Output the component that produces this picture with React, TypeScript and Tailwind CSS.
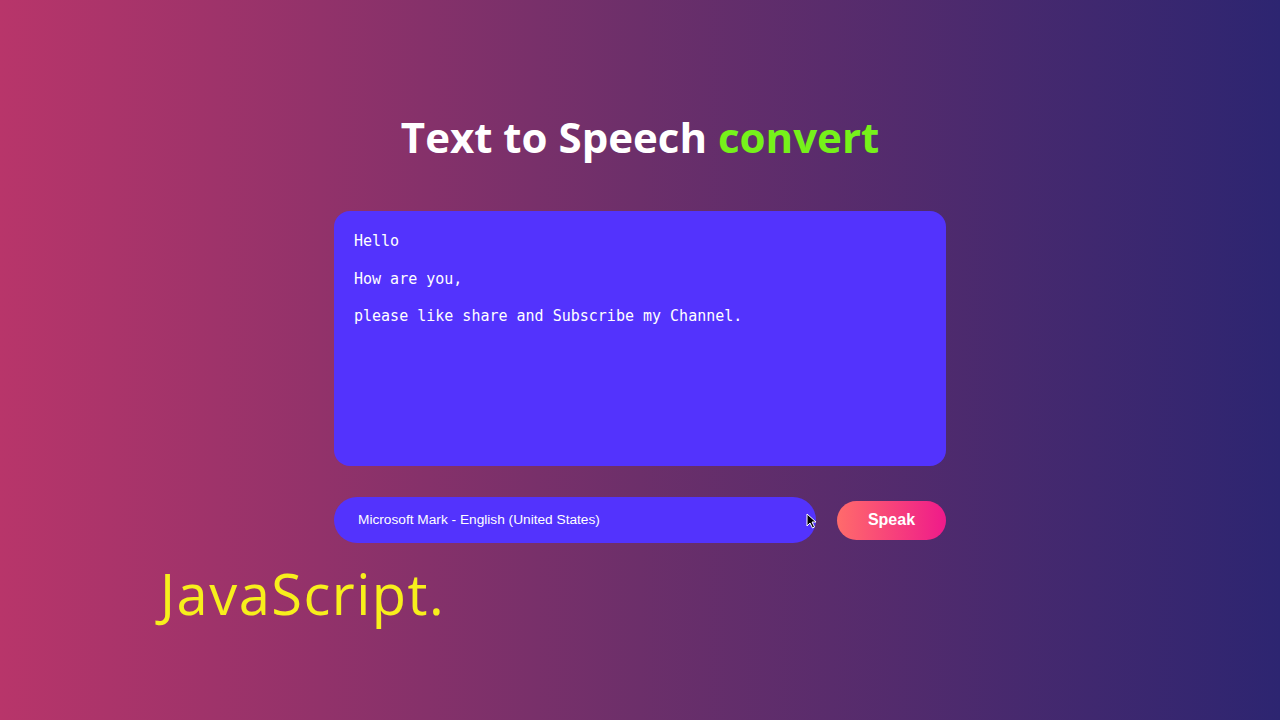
import React from "react";

export default function App() {
  return (
    <div className="w-[1280px] h-[720px] overflow-hidden bg-[linear-gradient(90deg,#b8356a_0%,#6c2f6a_50%,#2d2571_100%)] flex flex-col items-center">
      <h1 className="mt-[112px] text-[42px] leading-[50px] font-bold text-white font-['Open_Sans',sans-serif]">
        Text to Speech <span className="text-[#76f21a]">convert</span>
      </h1>
      <div className="mt-[49px] w-[612px] flex flex-col">
        <div className="h-[255px] rounded-[16px] bg-[#5333fd] px-5 pt-[21px] font-['DejaVu_Sans_Mono',monospace] text-[15px] leading-[18.75px] text-white whitespace-pre">
          {"Hello\n\nHow are you,\n\nplease like share and Subscribe my Channel."}
        </div>
        <div className="mt-[31px] flex items-center justify-between">
          <div className="relative w-[482px] h-[46px] rounded-full bg-[#5333fd] flex items-center pl-6 font-['Liberation_Sans',Arial,sans-serif] text-[13.7px] text-white">
            Microsoft Mark - English (United States)
            <svg className="absolute left-[472px] top-[16px]" width="11" height="16" viewBox="0 0 11 16">
              <path d="M1 1 L1 13 L4 10 L6.5 15 L8.5 14 L6 9 L10 9 Z" fill="#000" stroke="#fff" strokeWidth="1" />
            </svg>
          </div>
          <button className="w-[109px] h-[39px] rounded-full bg-[linear-gradient(90deg,#ff6b6b,#ef1a8a)] text-white font-bold text-[16px] font-['Liberation_Sans',Arial,sans-serif]">
            Speak
          </button>
        </div>
      </div>
      <div className="self-start pl-[160px] mt-[18px] text-[#f7ef1c] text-[56px] leading-[64px] font-['Open_Sans',sans-serif] tracking-[1.5px]">
        JavaScript.
      </div>
    </div>
  );
}
